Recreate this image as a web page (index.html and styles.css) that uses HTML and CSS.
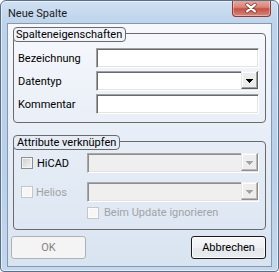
FILE: index.html
```html
<!DOCTYPE html>
<html>
<head>
<meta charset="utf-8">
<title>Neue Spalte</title>
<link rel="stylesheet" href="styles.css">
</head>
<body>
<div class="window">
  <div class="titlebar">
    <span class="title">Neue Spalte</span>
    <div class="close">
      <svg width="39" height="17" viewBox="0 0 39 17">
        <path d="M15.5 4.5L23.5 11.5M23.5 4.5L15.5 11.5" stroke="#7d3a33" stroke-width="3.8" stroke-linecap="round" fill="none"/>
        <path d="M15.5 4.5L23.5 11.5M23.5 4.5L15.5 11.5" stroke="#ffffff" stroke-width="2.2" stroke-linecap="round" fill="none"/>
      </svg>
    </div>
  </div>
  <div class="client">
    <div class="group g1">
      <div class="legend">Spalteneigenschaften</div>
      <div class="rows">
        <div class="row"><span class="label">Bezeichnung</span><div class="input"></div></div>
        <div class="row"><span class="label">Datentyp</span><div class="input combo"><span class="drop"><svg width="7" height="4" viewBox="0 0 7 4"><path d="M0 0h7v1h-1v1h-1v1h-1v1h-1v-1h-1v-1h-1v-1h-1z" fill="#000"/></svg></span></div></div>
        <div class="row"><span class="label">Kommentar</span><div class="input"></div></div>
      </div>
    </div>
    <div class="group g2">
      <div class="legend">Attribute verknüpfen</div>
      <div class="rows">
        <div class="row r1">
          <div class="checkcol"><span class="check"></span><span class="ctext">HiCAD</span></div>
          <div class="input combo disabled"><span class="drop"><svg width="7" height="4" viewBox="0 0 7 4"><path d="M0 0h7v1h-1v1h-1v1h-1v1h-1v-1h-1v-1h-1v-1h-1z" fill="#a3a3a3"/></svg></span></div>
        </div>
        <div class="row r2">
          <div class="checkcol"><span class="check off"></span><span class="ctext dim">Helios</span></div>
          <div class="input combo disabled"><span class="drop"><svg width="7" height="4" viewBox="0 0 7 4"><path d="M0 0h7v1h-1v1h-1v1h-1v1h-1v-1h-1v-1h-1v-1h-1z" fill="#a3a3a3"/></svg></span></div>
        </div>
        <div class="row r3">
          <span class="check off"></span><span class="ctext dim">Beim Update ignorieren</span>
        </div>
      </div>
    </div>
    <div class="buttons">
      <div class="btn disabled">OK</div>
      <div class="btn default">Abbrechen</div>
    </div>
  </div>
</div>
</body>
</html>
```

FILE: styles.css
```css
* { box-sizing: border-box; }
html, body { margin: 0; padding: 0; }
body {
  width: 279px;
  height: 272px;
  overflow: hidden;
  font-family: Roboto, "Liberation Sans", sans-serif;
  font-size: 11px;
  color: #000;
  background: #ffffff;
}
.window {
  width: 279px;
  height: 272px;
  display: flex;
  flex-direction: column;
  border: 1px solid #5b6f88;
  border-radius: 6px 6px 4px 4px;
  background: linear-gradient(to bottom, #cfe0f2 0, #bcd3eb 24px, #b9d0e9 60%, #c3d7ed 100%);
  box-shadow: inset 0 0 0 1px rgba(255,255,255,0.55);
  overflow: hidden;
}
.titlebar {
  height: 22px;
  flex: none;
  display: flex;
  justify-content: space-between;
  align-items: flex-start;
}
.title {
  padding-left: 7px;
  margin-top: 5px;
  line-height: 16px;
  color: #1b1b1b;
}
.close {
  width: 39px;
  height: 17px;
  margin-top: -1px;
  margin-right: 7px;
  border: 1px solid #8d3b33;
  border-top: none;
  border-radius: 0 0 4px 4px;
  background: linear-gradient(to bottom, #e6ada3 0, #d88478 45%, #c65046 55%, #d6887c 100%);
  box-shadow: inset 0 0 0 1px rgba(255,255,255,0.35);
  display: flex;
}
.close svg { margin-left: -1px; }
.client {
  flex: 1;
  margin: 0 6px 4px 6px;
  border: 1px solid #8499b0;
  background: linear-gradient(to bottom, #f6f8fc 0, #e8eef7 45%, #d9e4f1 100%);
  padding: 9px 5px 0 5px;
  display: flex;
  flex-direction: column;
}
.group {
  border: 1px solid #6a6a6a;
  border-radius: 4px;
  display: flex;
  flex-direction: column;
}
.legend {
  align-self: flex-start;
  display: block;
  margin: -7px 0 0 -1px;
  height: 15px;
  line-height: 13px;
  padding: 0 3px 0 2px;
  border: 1px solid #6a6a6a;
  border-radius: 4px;
  background: #f0f4fa;
  color: #000;
}
.g2 .legend { background: #e5ecf5; padding-left: 3px; }
.rows {
  display: flex;
  flex-direction: column;
}
.g1 .rows {
  padding: 6px 6px 8px 4px;
  gap: 3px;
}
.g2 { margin-top: 18px; }
.g2 .rows {
  padding: 3px 6px 10px 7px;
}
.row {
  display: flex;
  align-items: center;
  height: 20px;
}
.label { width: 78px; flex: none; }
.input {
  flex: 1;
  height: 20px;
  background: #ffffff;
  border-style: solid;
  border-width: 1px;
  border-color: #a0a0a0 #ffffff #ffffff #a0a0a0;
  box-shadow: inset 1px 1px 0 #6a6a6a, inset -1px -1px 0 #e3e3e3;
}
.combo {
  display: flex;
  justify-content: flex-end;
  padding: 0;
}
.drop {
  width: 17px;
  height: 18px;
  margin-top: -1px;
  background: #ececec;
  border-style: solid;
  border-width: 1px;
  border-color: #f4f4f4 #5e5e5e #5e5e5e #e6e6e6;
  box-shadow: inset -1px -1px 0 #a0a0a0, inset 1px 1px 0 #ffffff;
  display: flex;
  align-items: center;
  justify-content: center;
}
.drop svg { display: block; margin-top: 1px; }
.combo.disabled {
  background: #efefef;
  border-color: #a8a8a8 #ffffff #ffffff #a8a8a8;
  box-shadow: inset 1px 1px 0 #8e8e8e, inset -1px -1px 0 #e3e3e3;
}
.combo.disabled .drop {
  background: #ededed;
  border-color: #f4f4f4 #8e8e8e #8e8e8e #e6e6e6;
  box-shadow: inset -1px -1px 0 #b9b9b9, inset 1px 1px 0 #ffffff;
}
.checkcol {
  width: 66px;
  flex: none;
  display: flex;
  align-items: center;
  gap: 3px;
}
.check {
  width: 12px;
  height: 12px;
  flex: none;
  border: 1px solid #8f8f8f;
  background: linear-gradient(135deg, #cbcbcb 0, #e4e4e4 55%, #f4f4f4 100%);
  box-shadow: inset 0 0 0 1px #f4f4f4;
}
.check.off {
  border-color: #c6c6c6;
  background: #f6f6f6;
  box-shadow: inset 0 0 0 1px #fbfbfb;
}
.ctext { white-space: nowrap; }
.ctext.dim { color: #a3a3a3; }
.r1 .ctext { margin-left: 1px; }
.r2 { margin-top: 9px; }
.r3 {
  margin-top: 4px;
  height: 13px;
  padding-left: 66px;
  gap: 5px;
}
.buttons {
  display: flex;
  justify-content: space-between;
  margin: 6px 0 0 -2px;
}
.btn {
  width: 75px;
  height: 23px;
  border-radius: 3px;
  display: flex;
  align-items: center;
  justify-content: center;
}
.btn.disabled {
  border: 1px solid #adb2b5;
  background: #f4f4f4;
  color: #838383;
}
.btn.default {
  border: 1px solid #1a1a1a;
  background: linear-gradient(to bottom, #f6f7f9 0, #eef0f3 50%, #e4e7eb 51%, #e9ecef 100%);
  box-shadow: inset 0 0 0 1px #fbfbfb;
  color: #000;
}
```
